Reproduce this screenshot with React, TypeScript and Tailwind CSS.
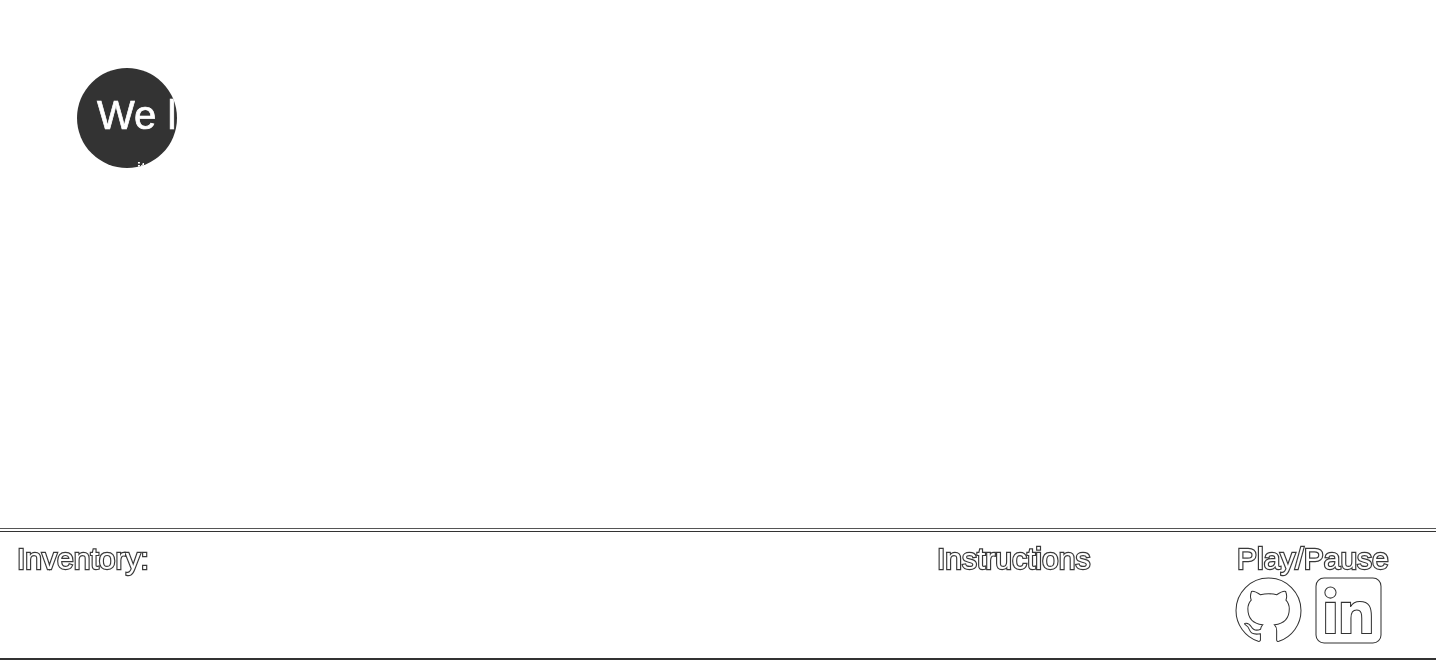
const ghPath = "M8 0c4.42 0 8 3.58 8 8a8.013 8.013 0 0 1-5.45 7.59c-.4.08-.55-.17-.55-.38 0-.27.01-1.13.01-2.2 0-.75-.25-1.23-.54-1.48 1.78-.2 3.65-.88 3.65-3.95 0-.88-.31-1.59-.82-2.15.08-.2.36-1.02-.08-2.12 0 0-.67-.22-2.2.82-.64-.18-1.32-.27-2-.27-.68 0-1.36.09-2 .27-1.53-1.03-2.2-.82-2.2-.82-.44 1.1-.16 1.92-.08 2.12-.51.56-.82 1.28-.82 2.15 0 3.06 1.86 3.75 3.64 3.95-.23.2-.44.55-.51 1.07-.46.21-1.61.55-2.33-.66-.15-.24-.6-.83-1.23-.82-.67.01-.27.38.01.53.34.19.73.9.82 1.13.16.45.68 1.31 2.69.94 0 .67.01 1.3.01 1.49 0 .21-.15.45-.55.38A7.995 7.995 0 0 1 0 8c0-4.42 3.58-8 8-8Z";
const inPath = "M20.447 20.452h-3.554v-5.569c0-1.328-.027-3.037-1.852-3.037-1.853 0-2.136 1.445-2.136 2.939v5.667H9.351V9h3.414v1.561h.046c.477-.9 1.637-1.85 3.37-1.85 3.601 0 4.267 2.37 4.267 5.455v6.286zM5.337 7.433c-1.144 0-2.063-.926-2.063-2.065 0-1.138.92-2.063 2.063-2.063 1.14 0 2.064.925 2.064 2.063 0 1.139-.925 2.065-2.064 2.065zm1.782 13.019H3.555V9h3.564v11.452zM21 0H3C1.3 0 0 1.3 0 3v18c0 1.7 1.3 3 3 3h18c1.7 0 3-1.3 3-3V3c0-1.7-1.3-3-3-3z";

const label = "font-['Liberation_Sans',Arial,sans-serif] text-[30px] leading-[32px] whitespace-nowrap text-white [-webkit-text-stroke:2.4px_#3a3a3a] [paint-order:stroke_fill] [will-change:transform]";

export default function App() {
  return (
    <div className="flex h-[660px] w-[1436px] flex-col overflow-hidden bg-white">
      <main className="flex-1 pl-[77px] pt-[68px]">
        <div className="relative h-[100px] w-[100px] overflow-hidden rounded-full bg-[#333333] font-['Liberation_Sans',Arial,sans-serif] text-white [will-change:transform]">
          <p className="w-[300px] whitespace-nowrap pl-[20px] pt-[24px] text-[40px] leading-[46px] [-webkit-text-stroke:0.7px_#ffffff]">We love</p>
          <p className="whitespace-nowrap pl-[60px] pt-[22px] text-[14px] leading-[16px] font-bold">it</p>
        </div>
      </main>
      <footer className="h-[132px] border-t border-[#555555]">
        <div className="mt-[2px] h-[129px] border-t border-b-2 border-[#333333]">
          <div className="flex pl-[17px] pt-[11px]">
            <div className={`w-[920px] ${label}`}>Inventory:</div>
            <div className={`w-[300px] ${label}`}>Instructions</div>
            <div className="flex flex-col">
              <div className={label}>Play/Pause</div>
              <div className="flex items-center gap-[15px] pt-[3px] -ml-[1px]">
                <svg viewBox="0 0 16 16" className="h-[65px] w-[65px]" fill="white" stroke="#333" strokeWidth="0.25" overflow="visible">
                  <path d={ghPath} />
                </svg>
                <svg viewBox="0 0 24 24" className="h-[65px] w-[65px]" fill="white" fillRule="evenodd" stroke="#333" strokeWidth="0.38" overflow="visible">
                  <path d={inPath} />
                </svg>
              </div>
            </div>
          </div>
        </div>
      </footer>
    </div>
  );
}
